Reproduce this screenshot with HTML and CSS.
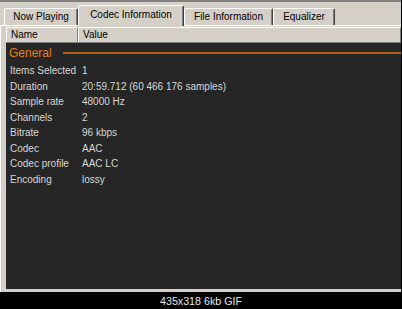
FILE: index.html
```html
<!DOCTYPE html>
<html>
  <head>
    <meta charset="UTF-8">
    <title>Codec Information</title>
    <link rel="stylesheet" href="styles.css">
  </head>
  <body>
    <div class="window">
      <div class="tabs">
        <div class="tab tab-now">Now Playing</div>
        <div class="tab tab-codec active">Codec Information</div>
        <div class="tab tab-file">File Information</div>
        <div class="tab tab-eq">Equalizer</div>
      </div>
      <div class="panel">
        <div class="list-header">
          <div class="col-head col-name">Name</div>
          <div class="col-head col-value">Value</div>
        </div>
        <div class="list">
          <div class="group">
            <span class="group-title">General</span>
            <span class="group-line"></span>
          </div>
          <div class="row"><span>Items Selected</span><span>1</span></div>
          <div class="row"><span>Duration</span><span>20:59.712 (60 466 176 samples)</span></div>
          <div class="row"><span>Sample rate</span><span>48000 Hz</span></div>
          <div class="row"><span>Channels</span><span>2</span></div>
          <div class="row"><span>Bitrate</span><span>96 kbps</span></div>
          <div class="row"><span>Codec</span><span>AAC</span></div>
          <div class="row"><span>Codec profile</span><span>AAC LC</span></div>
          <div class="row"><span>Encoding</span><span>lossy</span></div>
        </div>
      </div>
    </div>
    <div class="caption">435x318 6kb GIF</div>
  </body>
</html>
```

FILE: styles.css
```css
* {
  box-sizing: border-box;
}
body {
  margin: 0;
  width: 402px;
  height: 309px;
  background: #000;
  font-family: 'Liberation Sans', Arial, sans-serif;
  font-size: 10px;
  overflow: hidden;
}
/* Window frame */
.window {
  width: 401px;
  background: #d4d0c8;
  border-top: 2px solid #808080;
}
/* Tab strip */
.tabs {
  display: flex;
  align-items: flex-end;
  height: 23px;
  padding-left: 4px;
}
.tab {
  height: 17px;
  line-height: 16px;
  text-align: center;
  color: #000;
  border-top: 1px solid #fff;
  border-left: 1px solid #fff;
  border-right: 1px solid #404040;
  box-shadow: inset -1px 0 0 #808080;
  border-radius: 2px 2px 0 0;
}
.tab.active {
  height: 21px;
  line-height: 18px;
  margin-bottom: -1px;
  background: #d4d0c8;
  position: relative;
}
.tab-now { width: 74px; }
.tab-codec { width: 106px; }
.tab-file { width: 89px; }
.tab-eq { width: 62px; }
/* Panel with list */
.panel {
  border-top: 1px solid #fff;
  border-left: 1px solid #fff;
  padding: 1px 0 3px 5px;
}
.list-header {
  display: flex;
  height: 16px;
  border-bottom: 1px solid #808080;
}
.col-head {
  color: #000;
  line-height: 14px;
  padding-left: 4px;
  border-top: 1px solid #fff;
  border-left: 1px solid #fff;
  border-right: 1px solid #808080;
}
.col-name { width: 72px; }
.col-value { flex: 1; }
.list {
  height: 246px;
  background: #262626;
  color: #d6d6d6;
  padding-left: 4px;
}
.group {
  display: flex;
  align-items: center;
  height: 20px;
  margin-left: -1px;
}
.group-title {
  color: #e57e1e;
  font-size: 12px;
  margin-right: 11px;
}
.group-line {
  flex: 1;
  height: 2px;
  background: #b35c14;
}
.row {
  display: grid;
  grid-template-columns: 72px 1fr;
  height: 15.5px;
  line-height: 16px;
  white-space: nowrap;
}
/* Caption under the picture */
.caption {
  height: 17px;
  line-height: 18px;
  text-align: center;
  color: #e6e6e6;
  font-size: 10.7px;
}
```
